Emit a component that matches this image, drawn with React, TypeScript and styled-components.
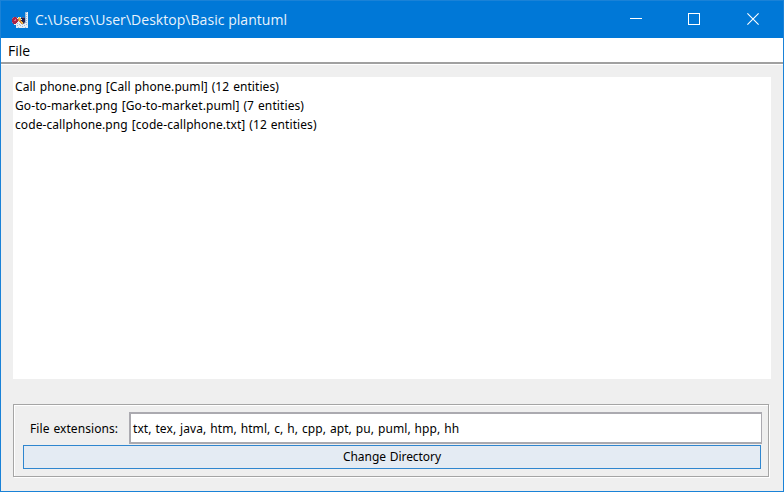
import React from "react";
import styled, { createGlobalStyle } from "styled-components";

const GlobalStyle = createGlobalStyle`
  *, *::before, *::after { box-sizing: border-box; }
  body { margin: 0; overflow: hidden; }
`;

const Window = styled.div`
  display: flex;
  flex-direction: column;
  width: 784px;
  height: 492px;
  border: 1px solid #1a82d7;
  background: #efefef;
  color: #000;
  font: 12px/19px "Noto Sans", sans-serif;
  word-spacing: 0.7px;
  white-space: pre;
`;

const TitleBar = styled.header`
  display: flex;
  align-items: center;
  flex: none;
  height: 37px;
  padding-left: 11px;
  background: #0078d7;
  color: #fff;
`;

const Text = styled.span<{ $spacing?: number }>`
  letter-spacing: ${(p) => p.$spacing ?? 0}px;
`;

const Title = styled.h1`
  flex: 1;
  margin: 1px 0 0 7px;
  font: 400 14px/20px "Open Sans", sans-serif;
  word-spacing: 0;
  color: #e8f3fc;
`;

const Controls = styled.div`
  display: flex;
  height: 100%;
  padding-right: 1px;
`;

const Control = styled.button`
  display: grid;
  place-items: center;
  width: 58.5px;
  padding: 0 0 1px;
  border: 0;
  background: transparent;
  color: #fff;
`;

const MenuBar = styled.nav`
  flex: none;
  height: 27px;
  padding: 3px 7px 0;
  border-bottom: 1px solid #fff;
  background: linear-gradient(#fff 24px, #a0a0a0 24px);
  font: 14px/20px "Open Sans", sans-serif;
`;

const Body = styled.main`
  display: flex;
  flex-direction: column;
  flex: 1;
  gap: 25px;
  padding: 12px 12px 13px;
`;

const FileList = styled.ul`
  height: 302px;
  margin: 0;
  padding: 0 2px;
  list-style: none;
  background: #fff;
`;

const FileRow = styled.li`
  height: 19px;
`;

const Group = styled.section`
  width: 756px;
  height: 73px;
  padding: 7px 6px 7px 9px;
  border: 1px solid #a5a5a5;
  box-shadow: inset 1px 1px #fff, 1px 1px #fff;
`;

const Field = styled.label`
  display: flex;
  align-items: center;
  height: 32px;
  margin-bottom: 1px;
`;

const FieldName = styled.span`
  width: 106px;
  padding-left: 7px;
`;

const Input = styled.div`
  width: 633px;
  height: 32px;
  padding: 5px 2px 0;
  border: 2px solid #abaab0;
  border-right-width: 1px;
  background: #fff;
`;

const Button = styled.button`
  display: block;
  width: 738px;
  height: 24px;
  padding: 0 0 1px;
  border: 1px solid #2f86cf;
  background: #e4ebf3;
  color: #000;
  font: inherit;
  word-spacing: inherit;
`;

const iconRows = [
  ".............ggw",
  ".............gww",
  ".............ggw",
  ".............gww",
  ".............ggw",
  ".prrp.wyw.bb.gww",
  "prrrrwyyynnnnggw",
  "rrrRrroyywnnngww",
  "rrRRrroyonnnnggw",
  "rrrrrrwooynnngww",
  "prrrrwwwoyynbggw",
  ".rrrwgwwwoybgwww",
  "..wwwwwgwwgwwwgw",
  "....wgwwgwwwgwww",
  "....wwwwwwgwwwww",
  "....wwgwwwwwwgww",
];

const iconColors: Record<string, string> = {
  w: "#e9eef4",
  g: "#9bbbd8",
  p: "#a95d88",
  r: "#a92548",
  R: "#e26979",
  y: "#f4bc49",
  o: "#d58134",
  b: "#765a75",
  n: "#25234e",
};

const AppIcon = () => (
  <svg width="16" height="16" viewBox="0 0 16 16" shapeRendering="crispEdges">
    {iconRows.flatMap((row, y) =>
      [...row].map((c, x) =>
        c === "." ? null : (
          <rect key={`${x}-${y}`} x={x} y={y} width="1" height="1" fill={iconColors[c]} />
        ),
      ),
    )}
  </svg>
);

const files = [
  { name: "Call phone.png [Call phone.puml] (12 entities)", spacing: 0.07 },
  { name: "Go-to-market.png [Go-to-market.puml] (7 entities)", spacing: 0.1 },
  { name: "code-callphone.png [code-callphone.txt] (12 entities)", spacing: 0.08 },
];

export default function App() {
  return (
    <Window>
      <GlobalStyle />
      <TitleBar>
        <AppIcon />
        <Title><Text $spacing={0.04}>C:\Users\User\Desktop\Basic plantuml</Text></Title>
        <Controls>
          <Control aria-label="Minimize">
            <svg width="12" height="12"><path d="M0 5.5H12" stroke="currentColor" /></svg>
          </Control>
          <Control aria-label="Maximize">
            <svg width="12" height="12"><rect x=".5" y=".5" width="11" height="11" fill="none" stroke="currentColor" /></svg>
          </Control>
          <Control aria-label="Close">
            <svg width="12" height="12"><path d="M.4 .4L11.6 11.6M11.6 .4L.4 11.6" stroke="currentColor" strokeWidth="1.1" /></svg>
          </Control>
        </Controls>
      </TitleBar>
      <MenuBar><Text>File</Text></MenuBar>
      <Body>
        <FileList>
          {files.map((f) => (
            <FileRow key={f.name}><Text $spacing={f.spacing}>{f.name}</Text></FileRow>
          ))}
        </FileList>
        <Group>
          <Field>
            <FieldName><Text $spacing={0.08}>File extensions:</Text></FieldName>
            <Input><Text $spacing={0.08}>txt, tex, java, htm, html, c, h, cpp, apt, pu, puml, hpp, hh</Text></Input>
          </Field>
          <Button><Text $spacing={-0.05}>Change Directory</Text></Button>
        </Group>
      </Body>
    </Window>
  );
}
